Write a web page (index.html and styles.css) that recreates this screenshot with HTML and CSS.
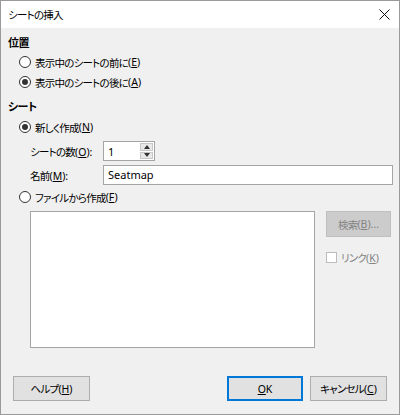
FILE: index.html
```html
<!DOCTYPE html>
<html lang="ja">
<head>
    <meta charset="UTF-8">
    <title>シートの挿入</title>
    <link rel="stylesheet" href="styles.css">
</head>
<body>
    <div class="dialog">
        <div class="titlebar">
            <span class="title">シートの挿入</span>
            <svg class="close" width="11" height="11" viewBox="0 0 11 11">
                <path d="M0.5 0.5 L10.5 10.5 M10.5 0.5 L0.5 10.5" stroke="#111" stroke-width="1"/>
            </svg>
        </div>

        <div class="content">
            <div class="heading">位置</div>
            <div class="radio-row"><span class="radio"></span>表示中のシートの前に<span class="key">(<u>E</u>)</span></div>
            <div class="radio-row"><span class="radio checked"></span>表示中のシートの後に<span class="key">(<u>A</u>)</span></div>

            <div class="heading heading-sheet">シート</div>
            <div class="radio-row"><span class="radio checked"></span>新しく作成<span class="key">(<u>N</u>)</span></div>

            <div class="field-row">
                <span class="field-label">シートの数<span class="key">(<u>O</u>):</span></span>
                <div class="spin">
                    <span class="spin-value">1</span>
                    <div class="spin-buttons">
                        <span class="spin-btn"><span class="arrow-up"></span></span>
                        <span class="spin-btn"><span class="arrow-down"></span></span>
                    </div>
                </div>
            </div>

            <div class="field-row">
                <span class="field-label">名前<span class="key">(<u>M</u>):</span></span>
                <div class="textbox">Seatmap</div>
            </div>

            <div class="radio-row radio-file"><span class="radio"></span>ファイルから作成<span class="key">(<u>F</u>)</span></div>

            <div class="file-area">
                <div class="listbox"></div>
                <div class="file-side">
                    <div class="btn btn-disabled">検索<span class="key">(<u>B</u>)...</span></div>
                    <div class="check-row"><span class="checkbox"></span>リンク<span class="key">(<u>K</u>)</span></div>
                </div>
            </div>
        </div>

        <div class="footer">
            <div class="btn btn-footer">ヘルプ<span class="key">(<u>H</u>)</span></div>
            <div class="footer-right">
                <div class="btn btn-footer btn-default"><span class="key"><u>O</u>K</span></div>
                <div class="btn btn-footer">キャンセル<span class="key">(<u>C</u>)</span></div>
            </div>
        </div>
    </div>
</body>
</html>
```

FILE: styles.css
```css
* {
    box-sizing: border-box;
}

body {
    margin: 0;
    font-family: "Noto Sans", "Noto Sans CJK JP", sans-serif;
    font-size: 10.5px;
    letter-spacing: -0.75px;
    font-feature-settings: "palt";
    color: #000;
    background-color: #fff;
}

.key {
    letter-spacing: 0;
    font-size: 10.5px;
}

.dialog {
    width: 400px;
    height: 415px;
    border: 1px solid #9a9a9a;
    background-color: #f0f0f0;
    display: flex;
    flex-direction: column;
}

.titlebar {
    height: 27px;
    background-color: #fff;
    display: flex;
    align-items: center;
    justify-content: space-between;
    padding: 0 8px 0 7px;
}

.close {
    margin-right: 1px;
}

.content {
    padding: 6px 6px 0 7px;
}

.heading {
    height: 18px;
    line-height: 18px;
    font-weight: bold;
    font-size: 11px;
    letter-spacing: -0.5px;
}

.heading-sheet {
    margin-top: 6px;
    height: 19px;
}

.radio-row {
    height: 20px;
    display: flex;
    align-items: center;
    padding-left: 11px;
}

.radio-file {
    margin-top: 2px;
}

.radio {
    width: 12px;
    height: 12px;
    border: 1px solid #333;
    border-radius: 50%;
    background-color: #fff;
    margin-right: 4px;
    display: flex;
    align-items: center;
    justify-content: center;
}

.radio.checked::after {
    content: "";
    width: 6px;
    height: 6px;
    border-radius: 50%;
    background-color: #333;
}

.field-row {
    display: flex;
    align-items: center;
    margin-top: 4px;
    padding-left: 22px;
}

.field-label {
    width: 73px;
}

.spin {
    width: 52px;
    height: 20px;
    border: 1px solid #a5a5a5;
    background-color: #fff;
    display: flex;
    align-items: center;
    justify-content: space-between;
    padding: 1px 1px 1px 4px;
}

.spin-value,
.textbox {
    font-size: 11px;
    letter-spacing: 0;
}

.spin-buttons {
    display: flex;
    flex-direction: column;
    gap: 1px;
    height: 100%;
}

.spin-btn {
    width: 13px;
    flex: 1;
    background-color: #e8e8e8;
    border: 1px solid #c8c8c8;
    display: flex;
    align-items: center;
    justify-content: center;
}

.arrow-up {
    border-left: 3px solid transparent;
    border-right: 3px solid transparent;
    border-bottom: 4px solid #333;
}

.arrow-down {
    border-left: 3px solid transparent;
    border-right: 3px solid transparent;
    border-top: 4px solid #333;
}

.textbox {
    flex: 1;
    height: 20px;
    border: 1px solid #a5a5a5;
    background-color: #fff;
    padding-left: 4px;
    line-height: 18px;
}

.file-area {
    display: flex;
    gap: 11px;
    margin-top: 4px;
    padding-left: 22px;
}

.listbox {
    width: 285px;
    height: 137px;
    border: 1px solid #a5a5a5;
    background-color: #fff;
}

.file-side {
    width: 65px;
}

.btn {
    height: 26px;
    display: flex;
    align-items: center;
    justify-content: center;
    border: 1px solid #adadad;
    background-color: #e1e1e1;
}

.btn-disabled {
    background-color: #cccccc;
    border-color: #bfbfbf;
    color: #838383;
}

.check-row {
    display: flex;
    align-items: center;
    margin-top: 13px;
    color: #838383;
}

.checkbox {
    width: 11px;
    height: 11px;
    border: 1px solid #bcbcbc;
    background-color: #fff;
    margin-right: 4px;
}

.footer {
    margin-top: auto;
    padding: 0 12px 13px 12px;
    display: flex;
    justify-content: space-between;
}

.footer-right {
    display: flex;
    gap: 7px;
}

.btn-footer {
    width: 77px;
    height: 25px;
}

.btn-default {
    width: 76px;
    border: 2px solid #0078d7;
}
```
